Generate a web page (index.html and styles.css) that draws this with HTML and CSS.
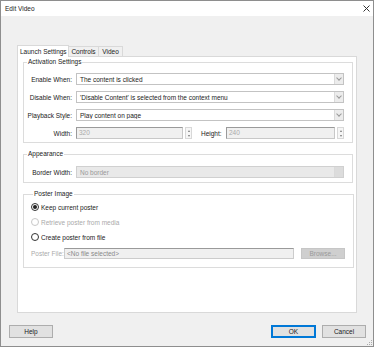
FILE: index.html
```html
<!DOCTYPE html>
<html lang="en">
<head>
  <meta charset="UTF-8">
  <title>Edit Video</title>
  <link rel="stylesheet" href="styles.css">
</head>
<body>

<div class="dialog">
  <div class="titlebar">
    <span class="title">Edit Video</span>
    <svg class="close" width="7" height="7" viewBox="0 0 7 7">
      <path d="M0.5 0.5 L6.5 6.5 M6.5 0.5 L0.5 6.5" stroke="#333" stroke-width="1"/>
    </svg>
  </div>

  <div class="content">
    <div class="tabs">
      <div class="tab active">Launch Settings</div>
      <div class="tab tab-controls">Controls</div>
      <div class="tab tab-video">Video</div>
    </div>

    <div class="panel">
      <fieldset class="group group-activation">
        <legend>Activation Settings</legend>
        <div class="form-row">
          <label>Enable When:</label>
          <div class="select"><span>The content is clicked</span><i class="arrow"></i></div>
        </div>
        <div class="form-row">
          <label>Disable When:</label>
          <div class="select"><span>'Disable Content' is selected from the context menu</span><i class="arrow"></i></div>
        </div>
        <div class="form-row">
          <label>Playback Style:</label>
          <div class="select"><span>Play content on page</span><i class="arrow"></i></div>
        </div>
        <div class="form-row">
          <label>Width:</label>
          <div class="size-fields">
            <div class="num-input">320</div>
            <div class="spinner"><i class="up"></i><i class="down"></i></div>
            <label class="height-label">Height:</label>
            <div class="num-input wide">240</div>
            <div class="spinner"><i class="up"></i><i class="down"></i></div>
          </div>
        </div>
      </fieldset>

      <fieldset class="group group-appearance">
        <legend>Appearance</legend>
        <div class="form-row">
          <label>Border Width:</label>
          <div class="select disabled"><span>No border</span><i class="arrow"></i></div>
        </div>
      </fieldset>

      <fieldset class="group group-poster">
        <legend>Poster Image</legend>
        <div class="radio-row"><i class="radio checked"></i><span>Keep current poster</span></div>
        <div class="radio-row disabled"><i class="radio"></i><span>Retrieve poster from media</span></div>
        <div class="radio-row"><i class="radio"></i><span>Create poster from file</span></div>
        <div class="file-row">
          <label>Poster File:</label>
          <div class="file-input">&lt;No file selected&gt;</div>
          <div class="btn browse">Browse...</div>
        </div>
      </fieldset>
    </div>
  </div>

  <div class="footer">
    <div class="btn">Help</div>
    <div class="footer-right">
      <div class="btn default">OK</div>
      <div class="btn">Cancel</div>
    </div>
  </div>

  <svg class="grip" width="7" height="7" viewBox="0 0 7 7">
    <rect x="5" y="1" width="1" height="1" fill="#aaa"/>
    <rect x="3" y="3" width="1" height="1" fill="#aaa"/>
    <rect x="5" y="3" width="1" height="1" fill="#aaa"/>
    <rect x="1" y="5" width="1" height="1" fill="#aaa"/>
    <rect x="3" y="5" width="1" height="1" fill="#aaa"/>
    <rect x="5" y="5" width="1" height="1" fill="#aaa"/>
  </svg>
</div>

</body>
</html>
```

FILE: styles.css
```css
* {
  box-sizing: border-box;
}

body {
  margin: 0;
  font-family: "Liberation Sans", Arial, sans-serif;
  font-size: 6.5px;
  color: #222;
}

.dialog {
  position: relative;
  width: 374px;
  height: 347px;
  border: 1px solid #8e8e8e;
  background-color: #f0f0f0;
  display: flex;
  flex-direction: column;
}

.titlebar {
  height: 15px;
  background-color: #fff;
  display: flex;
  align-items: center;
  justify-content: space-between;
  padding: 0 3px 0 4px;
}

.close {
  display: block;
}

.content {
  padding: 29px 16px 0 16px;
}

.tabs {
  display: flex;
  align-items: flex-end;
  height: 11px;
}

.tab {
  height: 10px;
  line-height: 9px;
  padding: 0 2px;
  border: 1px solid #d9d9d9;
  border-bottom: none;
  background-color: #f0f0f0;
  white-space: nowrap;
  text-align: center;
}

.tab.active {
  width: 52px;
  height: 12px;
  line-height: 11px;
  background-color: #fff;
  margin-bottom: -1px;
  position: relative;
  z-index: 1;
}

.tab-controls {
  width: 30px;
  border-left: none;
}

.tab-video {
  width: 24px;
  border-left: none;
}

.panel {
  width: 340px;
  height: 257px;
  background-color: #fff;
  border: 1px solid #d9d9d9;
  padding: 1px 3px 0 5px;
}

.group {
  margin: 0;
  border: 1px solid #dcdcdc;
  padding: 0 8px 3px 0;
}

.group legend {
  padding: 0 1px;
  margin-left: 3px;
  line-height: 8px;
}

.group + .group {
  margin-top: 7px;
}

.group-activation {
  padding-top: 7px;
  display: flex;
  flex-direction: column;
  gap: 6px;
}

.group-appearance {
  padding-top: 8px;
  padding-bottom: 4px;
}

.group-poster {
  padding: 4px 8px 8px 6px;
  display: flex;
  flex-direction: column;
  gap: 5px;
}

.form-row {
  display: grid;
  grid-template-columns: 48px 1fr;
  column-gap: 4px;
  align-items: center;
  height: 12px;
}

.form-row > label {
  text-align: right;
  white-space: nowrap;
}

.select {
  height: 12px;
  border: 1px solid #c3c3c3;
  display: flex;
  align-items: center;
  background-color: #fff;
}

.select span {
  flex: 1;
  padding-left: 3px;
  white-space: nowrap;
  overflow: hidden;
}

.select .arrow {
  width: 9px;
  height: 10px;
  background-color: #ececec;
  border-left: 1px solid #dadada;
  position: relative;
}

.select .arrow::after {
  content: "";
  position: absolute;
  left: 2px;
  top: 2px;
  width: 3px;
  height: 3px;
  border-right: 1px solid #999;
  border-bottom: 1px solid #999;
  transform: rotate(45deg);
}

.select.disabled {
  background-color: #e9e9e9;
  border-color: #d0d0d0;
  color: #999;
}

.select.disabled .arrow {
  background-color: #dcdcdc;
}

.select.disabled .arrow::after {
  display: none;
}

.size-fields {
  display: flex;
  align-items: center;
  height: 12px;
}

.num-input {
  width: 107px;
  height: 12px;
  border: 1px solid #c8c8c8;
  border-top-color: #9a9a9a;
  border-left-color: #9a9a9a;
  background-color: #f0f0f0;
  color: #aaa;
  padding-left: 2px;
  line-height: 10px;
}

.num-input.wide {
  width: 109px;
}

.spinner {
  width: 7px;
  height: 12px;
  margin-left: 2px;
  border: 1px solid #d8d8d8;
  display: flex;
  flex-direction: column;
  align-items: center;
  justify-content: space-around;
  background-color: #f6f6f6;
}

.spinner i {
  width: 0;
  height: 0;
  border-left: 1.5px solid transparent;
  border-right: 1.5px solid transparent;
}

.spinner .up {
  border-bottom: 2px solid #777;
}

.spinner .down {
  border-top: 2px solid #777;
}

.height-label {
  width: 22px;
  margin: 0 3px 0 9px;
}

.radio-row {
  display: flex;
  align-items: center;
  height: 10px;
  padding-left: 1px;
}

.radio-row.disabled {
  color: #aaa;
}

.radio {
  width: 8px;
  height: 8px;
  border: 1px solid #333;
  border-radius: 50%;
  margin-right: 2px;
  position: relative;
}

.radio-row.disabled .radio {
  border-color: #c8c8c8;
}

.radio.checked::after {
  content: "";
  position: absolute;
  left: 1px;
  top: 1px;
  width: 4px;
  height: 4px;
  border-radius: 50%;
  background-color: #222;
}

.file-row {
  display: flex;
  align-items: center;
  height: 12px;
  padding-left: 1px;
}

.file-row label {
  color: #aaa;
  width: 33px;
}

.file-input {
  width: 230px;
  height: 11px;
  border: 1px solid #ccc;
  border-top-color: #9a9a9a;
  background-color: #f0f0f0;
  color: #888;
  padding-left: 2px;
  line-height: 9px;
}

.btn {
  width: 44px;
  height: 13px;
  border: 1px solid #adadad;
  background-color: #e1e1e1;
  text-align: center;
  line-height: 11px;
}

.btn.browse {
  margin-left: 7px;
  height: 11px;
  line-height: 9px;
  color: #999;
  border-color: #c6c6c6;
  background-color: #cfcfcf;
}

.btn.default {
  width: 45px;
  border: 1px solid #0078d7;
  box-shadow: inset 0 0 0 1px #0078d7;
}

.footer {
  margin-top: 12px;
  padding: 0 7px 0 8px;
  display: flex;
  justify-content: space-between;
}

.footer-right {
  display: flex;
  gap: 6px;
}

.grip {
  position: absolute;
  right: 0;
  bottom: 0;
}
```
